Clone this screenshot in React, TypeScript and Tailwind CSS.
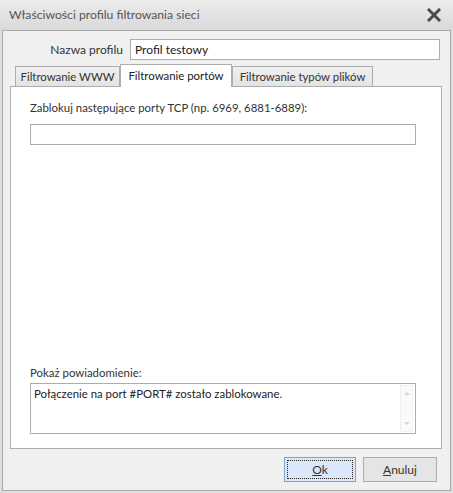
import React from 'react';

const font = { fontFamily: 'Lato, "Liberation Sans", sans-serif' };

const CloseIcon = () => (
  <svg width="14" height="14" viewBox="0 0 14 14">
    <path d="M2 2 L12 12 M12 2 L2 12" stroke="#4a4a4a" strokeWidth="3" strokeLinecap="square" />
  </svg>
);

export default function App() {
  return (
    <div
      className="flex h-[493px] w-[453px] flex-col bg-[#dedede] text-[11.4px] text-[#333]"
      style={font}
    >
      {/* title bar */}
      <div className="flex h-[30px] items-center justify-between bg-gradient-to-b from-[#ececec] to-[#d9d9d9] pl-[9px] pr-[12px]">
        <span className="text-[12.2px] text-[#555]">Właściwości profilu filtrowania sieci</span>
        <CloseIcon />
      </div>

      {/* body */}
      <div className="mx-[2px] mb-[2px] flex flex-1 flex-col border border-[#a9a9a9] bg-[#f0f0f0]">
        <div className="mt-[8px] flex h-[21px] items-center">
          <div className="w-[127px] pr-[7px] text-right text-[12px] text-[#333]">Nazwa profilu</div>
          <div className="flex h-[21px] w-[310px] items-center border border-[#adadad] bg-white px-[4px] text-[12px] text-[#222]">
            Profil testowy
          </div>
        </div>

        <div className="ml-[7px] mt-[4px] w-[432px]">
          <div className="flex items-end pl-[5px]">
            <div className="flex h-[20px] w-[105px] items-center justify-center border border-b-0 border-[#adadad] bg-gradient-to-b from-[#f0f0f0] to-[#e3e3e3] text-[#333]">
              Filtrowanie WWW
            </div>
            <div className="relative z-10 -mb-px flex h-[23px] w-[112px] items-center justify-center border border-b-0 border-[#adadad] bg-white text-[#222]">
              Filtrowanie portów
            </div>
            <div className="flex h-[20px] w-[141px] items-center justify-center border border-b-0 border-[#adadad] bg-gradient-to-b from-[#f0f0f0] to-[#e3e3e3] text-[#333]">
              Filtrowanie typów plików
            </div>
          </div>
          <div className="flex h-[363px] flex-col border border-[#adadad] bg-white px-[19px]">
            <div className="mt-[12px] h-[18px] leading-[18px] text-[#333]">
              Zablokuj następujące porty TCP (np. 6969, 6881-6889):
            </div>
            <div className="mt-[7px] h-[21px] w-[386px] border border-[#adadad] bg-white" />
            <div className="flex-1" />
            <div className="h-[18px] leading-[18px] text-[#333]">Pokaż powiadomienie:</div>
            <div className="mb-[14px] mt-[1px] flex h-[51px] w-[386px] border border-[#adadad] bg-white">
              <div className="flex-1 px-[3px] pt-[1px] text-[#222]">
                Połączenie na port #PORT# zostało zablokowane.
              </div>
              <div className="my-[1px] mr-[2px] flex w-[13px] flex-col items-center justify-between border border-[#f0f0f0] bg-[#fafafa] py-[6px]">
                <div className="h-0 w-0 border-x-[3px] border-b-[3px] border-x-transparent border-b-[#d6d6d6]" />
                <div className="h-0 w-0 border-x-[3px] border-t-[3px] border-x-transparent border-t-[#d6d6d6]" />
              </div>
            </div>
          </div>
        </div>

        <div className="mr-[13px] mt-[8px] flex justify-end gap-[7px]">
          <button className="h-[25px] w-[72px] border border-[#7f9fd0] bg-[#dce7fb] p-[2px] text-[12px] text-[#333]">
            <div className="flex h-full w-full items-center justify-center border border-dotted border-[#222]">
              <span><span className="underline">O</span>k</span>
            </div>
          </button>
          <button className="flex h-[25px] w-[74px] items-center justify-center border border-[#adadad] bg-[#e5e5e5] text-[12px] text-[#333]">
            <span><span className="underline">A</span>nuluj</span>
          </button>
        </div>
      </div>
    </div>
  );
}
